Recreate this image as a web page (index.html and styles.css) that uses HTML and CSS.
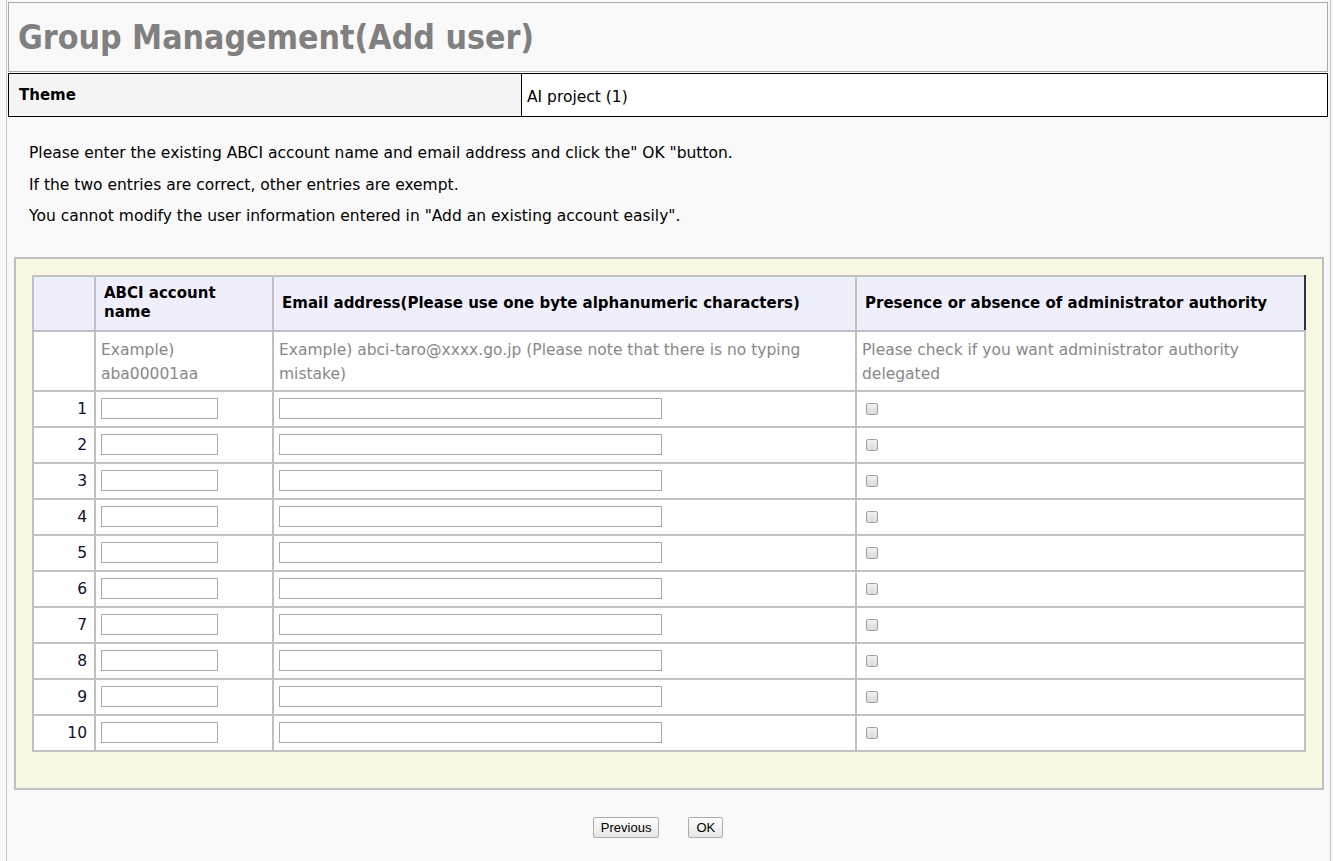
FILE: index.html
```html
<!DOCTYPE html>
<html lang="en">
<head>
<meta charset="utf-8">
<title>Group Management(Add user)</title>
<link rel="stylesheet" href="styles.css">
</head>
<body>
<div class="page">
  <div class="title-box">
    <h1 class="title">Group Management(Add user)</h1>
  </div>
  <table class="theme">
    <tr>
      <th class="theme-label">Theme</th>
      <td class="theme-value">AI project (1)</td>
    </tr>
  </table>
  <div class="notes">
    <p>Please enter the existing ABCI account name and email address and click the" OK "button.</p>
    <p>If the two entries are correct, other entries are exempt.</p>
    <p>You cannot modify the user information entered in "Add an existing account easily".</p>
  </div>
  <div class="panel">
    <table class="users">
      <colgroup>
        <col class="c-num">
        <col class="c-acc">
        <col class="c-mail">
        <col class="c-adm">
      </colgroup>
      <thead>
        <tr class="head">
          <th></th>
          <th>ABCI account name</th>
          <th>Email address(Please use one byte alphanumeric characters)</th>
          <th>Presence or absence of administrator authority</th>
        </tr>
      </thead>
      <tbody>
        <tr class="example">
          <td></td>
          <td>Example) aba00001aa</td>
          <td>Example) abci-taro@xxxx.go.jp (Please note that there is no typing mistake)</td>
          <td>Please check if you want administrator authority delegated</td>
        </tr>
        <tr class="row"><td class="num">1</td><td><input class="in-acc" type="text"></td><td><input class="in-mail" type="text"></td><td><input class="chk" type="checkbox"></td></tr>
        <tr class="row"><td class="num">2</td><td><input class="in-acc" type="text"></td><td><input class="in-mail" type="text"></td><td><input class="chk" type="checkbox"></td></tr>
        <tr class="row"><td class="num">3</td><td><input class="in-acc" type="text"></td><td><input class="in-mail" type="text"></td><td><input class="chk" type="checkbox"></td></tr>
        <tr class="row"><td class="num">4</td><td><input class="in-acc" type="text"></td><td><input class="in-mail" type="text"></td><td><input class="chk" type="checkbox"></td></tr>
        <tr class="row"><td class="num">5</td><td><input class="in-acc" type="text"></td><td><input class="in-mail" type="text"></td><td><input class="chk" type="checkbox"></td></tr>
        <tr class="row"><td class="num">6</td><td><input class="in-acc" type="text"></td><td><input class="in-mail" type="text"></td><td><input class="chk" type="checkbox"></td></tr>
        <tr class="row"><td class="num">7</td><td><input class="in-acc" type="text"></td><td><input class="in-mail" type="text"></td><td><input class="chk" type="checkbox"></td></tr>
        <tr class="row"><td class="num">8</td><td><input class="in-acc" type="text"></td><td><input class="in-mail" type="text"></td><td><input class="chk" type="checkbox"></td></tr>
        <tr class="row"><td class="num">9</td><td><input class="in-acc" type="text"></td><td><input class="in-mail" type="text"></td><td><input class="chk" type="checkbox"></td></tr>
        <tr class="row"><td class="num">10</td><td><input class="in-acc" type="text"></td><td><input class="in-mail" type="text"></td><td><input class="chk" type="checkbox"></td></tr>
      </tbody>
    </table>
  </div>
  <div class="actions">
    <button class="btn" type="button">Previous</button>
    <button class="btn" type="button">OK</button>
  </div>
</div>
</body>
</html>
```

FILE: styles.css
```css
* { box-sizing: border-box; }

html, body {
  margin: 0;
  padding: 0;
  background: #f9f9f9;
}

body {
  font-family: "DejaVu Sans", Verdana, sans-serif;
  font-size: 15.5px;
  color: #000;
}

.page {
  margin-left: 6px;
  width: 1325px;
  min-height: 100vh;
  border-left: 1px solid #c8c8c8;
  border-right: 1px solid #c8c8c8;
  padding: 2px 2px 0 1px;
}

.title-box {
  height: 70px;
  border: 1px solid #aaaaaa;
  background: #f9f9f9;
  display: flex;
  align-items: center;
  padding-left: 9px;
}

.title {
  margin: 0;
  font-family: "DejaVu Sans Condensed", "DejaVu Sans", sans-serif;
  font-stretch: condensed;
  font-size: 33.6px;
  font-weight: bold;
  color: #808080;
}

.theme {
  margin-top: 1px;
  width: 100%;
  border-collapse: collapse;
  border: 1px solid #000;
  height: 44px;
}

.theme-label {
  width: 513px;
  background: #f4f4f4;
  border-right: 1px solid #000;
  text-align: left;
  font-size: 15px;
  font-weight: bold;
  padding: 0 10px;
}

.theme-value {
  background: #fff;
  padding: 4px 5px 0;
}

.notes {
  padding: 21px 0 24px 21px;
}

.notes p {
  margin: 0;
  line-height: 31.5px;
}

.panel {
  margin: 0 4px 0 6px;
  border: 2px solid #c0c0c0;
  background: #f8f7e3;
  padding: 16px 15px 36px 16px;
}

.users {
  width: 1272px;
  border-collapse: collapse;
  table-layout: fixed;
  background: #fff;
  border: 2px solid #c0c0c0;
}

.c-num { width: 62px; }
.c-acc { width: 178px; }
.c-mail { width: 583px; }
.c-adm { width: 449px; }

.users th,
.users td {
  border: 2px solid #c0c0c0;
  padding: 5px;
  vertical-align: middle;
}

.head th {
  background: #efeffb;
  height: 55px;
  text-align: left;
  font-size: 15px;
  font-weight: bold;
  line-height: 19px;
  padding: 4px 12px 4px 8px;
}

.head th:last-child {
  border-right-color: #333;
}

.example td {
  color: #888888;
  line-height: 24px;
  height: 60px;
  padding: 6px 5px 4px;
}

.row td {
  height: 36px;
  padding: 0 5px;
}

.row td.num {
  text-align: right;
  padding-right: 7px;
  color: #101030;
}

.in-acc,
.in-mail {
  display: block;
  height: 21px;
  border: 1px solid #a9a9a9;
  background: #fff;
  padding: 0 2px;
  margin: 0;
  font-size: 13px;
}

.in-acc { width: 117px; }
.in-mail { width: 383px; }

.chk {
  -webkit-appearance: none;
  appearance: none;
  display: block;
  width: 12px;
  height: 12px;
  margin: 1px 0 0 4px;
  border: 1px solid #a0a0a0;
  border-radius: 2px;
  background: linear-gradient(#f0f0f0, #dcdcdc);
}

.actions {
  display: flex;
  justify-content: center;
  gap: 29px;
  padding: 27px 20px 0 0;
}

.btn {
  font-family: "Liberation Sans", Arial, sans-serif;
  font-size: 13px;
  height: 21px;
  padding: 0 7px;
  border: 1px solid #adadad;
  border-radius: 2px;
  background: linear-gradient(#fdfdfd, #e6e6e6);
  color: #000;
}
```
